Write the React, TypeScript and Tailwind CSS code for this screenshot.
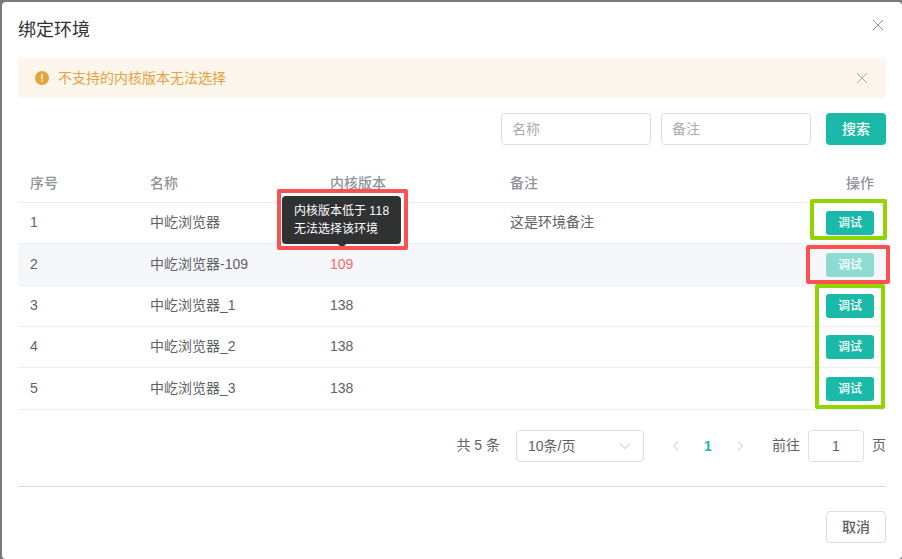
const rows = [
  { id: 1, name: "中屹浏览器", version: "", remark: "这是环境备注", height: "h-[41px]" },
  { id: 2, name: "中屹浏览器-109", version: "109", remark: "", height: "h-[42px]", disabled: true },
  { id: 3, name: "中屹浏览器_1", version: "138", remark: "", height: "h-[41px]" },
  { id: 4, name: "中屹浏览器_2", version: "138", remark: "", height: "h-[41px]" },
  { id: 5, name: "中屹浏览器_3", version: "138", remark: "", height: "h-[42px]" },
];

const CloseIcon = ({ className }: { className: string }) => (
  <svg viewBox="0 0 12 12" className={className} fill="none" stroke="currentColor" strokeWidth="1">
    <path d="M1 1l10 10M11 1L1 11" />
  </svg>
);

const WarningIcon = () => (
  <svg viewBox="0 0 14 14" className="h-[14px] w-[14px]">
    <circle cx="7" cy="7" r="7" fill="#e6a23c" />
    <path d="M6 3.2h2l-.35 5.2h-1.3z" fill="#fdf6ec" />
    <circle cx="7" cy="10.2" r=".9" fill="#fdf6ec" />
  </svg>
);

const Arrow = ({ d, className }: { d: string; className: string }) => (
  <svg viewBox="0 0 12 12" className={className} fill="none" stroke="#b4b7bd" strokeWidth="0.9">
    <path d={d} />
  </svg>
);

const KernelTooltip = () => (
  <div className="absolute left-[282px] top-[196px] h-12 w-[119px] rounded-[4px] bg-[#303133] pl-3 pt-[6px] text-[12px] leading-[18px] text-white">
    <div className="absolute -bottom-[2px] left-[54px] h-[10px] w-3 overflow-hidden">
      <div className="mx-auto h-[10px] w-[10px] rotate-45 rounded-[2px] bg-[#303133]"></div>
    </div>
    <div className="relative whitespace-nowrap">
      内核版本低于 <span className="tracking-[0.4px]">118</span>
    </div>
    <div className="relative whitespace-nowrap">无法选择该环境</div>
  </div>
);

const App = () => {
  return (
    <div className="relative h-[559px] w-[902px] overflow-hidden bg-[#7b7a7b] pl-[2px] pt-[2px] font-['Liberation_Sans','Noto_Sans_CJK_SC',sans-serif] text-[14px] text-[#606266]">
      <div className="flex h-[557px] w-[900px] flex-col rounded-[4px] bg-white px-4">
        <header className="flex h-14 justify-between">
          <h1 className="pt-4 text-[18px] leading-6 text-[#303133]">绑定环境</h1>
          <CloseIcon className="mr-[2px] mt-[17px] h-3 w-3 text-[#909399]" />
        </header>

        <div className="flex h-10 shrink-0 items-center rounded-[4px] bg-[#fdf6ec] px-[17px] text-[#e6a23c]">
          <WarningIcon />
          <span className="ml-[9px] flex-1">不支持的内核版本无法选择</span>
          <CloseIcon className="mr-[1px] h-3 w-3 text-[#a8abb2]" />
        </div>

        <div className="mt-[15px] flex h-8 shrink-0 justify-end text-[#a8abb2]">
          <div className="flex w-[150px] items-center rounded-[4px] border border-[#dcdfe6] px-[10px]">名称</div>
          <div className="ml-[10px] flex w-[150px] items-center rounded-[4px] border border-[#dcdfe6] px-[10px]">备注</div>
          <button className="ml-[15px] w-[60px] rounded-[4px] bg-[#1ab9a8] font-medium text-white">搜索</button>
        </div>

        <div className="mt-[18px] shrink-0">
          <div className="grid h-10 grid-cols-[120px_180px_180px_1fr_100px] items-center border-b border-[#ebeef5] pt-[2px] font-medium text-[#909399] *:px-3">
            <div>序号</div>
            <div>名称</div>
            <div>内核版本</div>
            <div>备注</div>
            <div className="text-right">操作</div>
          </div>
          {rows.map((row) => (
            <div
              key={row.id}
              className={`grid grid-cols-[120px_180px_180px_1fr_100px] items-end border-b border-[#ebeef5] pb-2 leading-6 *:px-3 ${row.height} ${row.disabled ? "bg-[#f5f7fa]" : ""}`}
            >
              <div className="pb-px">{row.id}</div>
              <div className="pb-px">{row.name}</div>
              <div className={`pb-px ${row.disabled ? "text-[#f56c6c]" : ""}`}>{row.version}</div>
              <div className="pb-px">{row.remark}</div>
              <div className="flex justify-end">
                <button
                  className={`h-6 w-12 rounded-[3px] text-[12px] font-medium text-white ${row.disabled ? "bg-[#8cdcd3]" : "bg-[#1ab9a8]"}`}
                >
                  调试
                </button>
              </div>
            </div>
          ))}
        </div>

        <div className="mt-5 flex h-8 shrink-0 items-center justify-end">
          <span className="pb-[2px]">共 5 条</span>
          <div className="ml-4 flex h-8 w-32 items-center justify-between rounded-[4px] border border-[#dcdfe6] pl-[11px] pr-3">
            <span>10条/页</span>
            <Arrow className="h-3 w-3" d="M1 3.5l5 5 5-5" />
          </div>
          <div className="ml-4 flex h-8">
            <span className="flex w-8 items-center justify-center">
              <Arrow className="h-3 w-3" d="M8 1.5L3.5 6L8 10.5" />
            </span>
            <span className="flex w-8 items-center justify-center font-bold text-[#1ab9a8]">1</span>
            <span className="flex w-8 items-center justify-center">
              <Arrow className="h-3 w-3" d="M4 1.5L8.5 6L4 10.5" />
            </span>
          </div>
          <span className="ml-4 pb-[2px]">前往</span>
          <div className="ml-2 flex h-8 w-14 items-center justify-center rounded-[4px] border border-[#dcdfe6]">1</div>
          <span className="ml-2 pb-[2px]">页</span>
        </div>

        <footer className="mt-6 flex justify-end border-t border-[#dcdcdf] pt-6">
          <button className="h-8 w-[60px] rounded-[4px] border border-[#dcdfe6] font-medium">取消</button>
        </footer>
      </div>

      <KernelTooltip />

      {/* highlight frames */}
      <div className="absolute left-[277px] top-[189px] h-[61px] w-[131px] rounded-[2px] border-4 border-[#fb5151]"></div>
      <div className="absolute left-[810px] top-[199px] h-[41px] w-[77px] rounded-[2px] border-4 border-[#92d400]"></div>
      <div className="absolute left-[815px] top-[284px] h-[125px] w-[70px] rounded-[2px] border-4 border-[#92d400]"></div>
      <div className="absolute left-[806px] top-[245px] h-[39px] w-[84px] rounded-[2px] border-4 border-[#fb5151]"></div>
    </div>
  );
};

export default App;
